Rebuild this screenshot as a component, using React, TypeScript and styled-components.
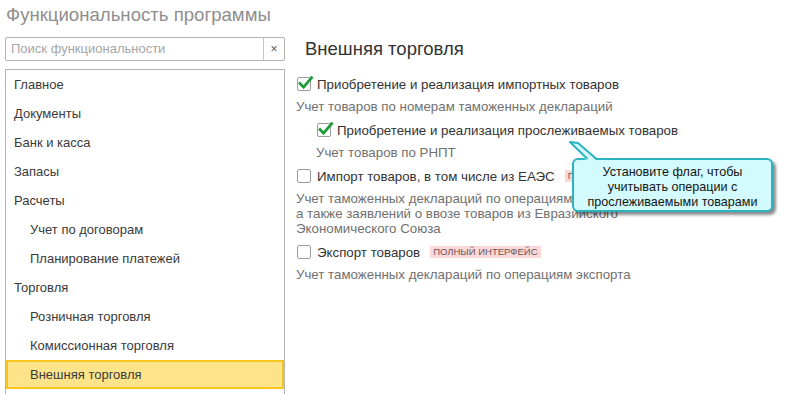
import React from "react";
import styled, { createGlobalStyle } from "styled-components";

const Global = createGlobalStyle`
  html, body { margin: 0; padding: 0; background: #fff; overflow: hidden; }
  body { font-family: "Liberation Sans", Arial, sans-serif; }
`;

const Page = styled.div`
  position: relative;
  width: 788px;
  height: 394px;
  overflow: hidden;
`;

const Title = styled.h1`
  margin: 0;
  padding-left: 6px;
  height: 30px;
  font-weight: normal;
  font-size: 18.6px;
  line-height: 30px;
  color: #8e8e8e;
`;

const Body = styled.div`
  display: flex;
  margin-top: 7px;
`;

const Sidebar = styled.div`
  flex: none;
  width: 280px;
  margin-left: 5px;
  display: flex;
  flex-direction: column;
`;

const Search = styled.div`
  display: flex;
  height: 24px;
  box-sizing: border-box;
  border: 1px solid #b3b3b3;
  border-radius: 2px;
`;

const SearchText = styled.div`
  flex: 1;
  padding-left: 5px;
  font-size: 13px;
  line-height: 22px;
  color: #a6a6a6;
`;

const ClearBtn = styled.div`
  width: 20px;
  border-left: 1px solid #c6c6c6;
  display: flex;
  align-items: center;
  justify-content: center;
  font-size: 12px;
  color: #555;
`;

const List = styled.div`
  margin-top: 8px;
  border: 1px solid #b3b3b3;
  padding-bottom: 40px;
`;

const Item = styled.div<{ $nested?: boolean; $selected?: boolean }>`
  height: 29px;
  box-sizing: border-box;
  display: flex;
  align-items: center;
  padding-left: ${(p) => (p.$nested ? 22 : 6)}px;
  border: 2px solid ${(p) => (p.$selected ? "#f6c61e" : "transparent")};
  background: ${(p) => (p.$selected ? "#fde48b" : "transparent")};
  font-size: 13px;
  color: #3a3a3a;
`;

const Content = styled.div`
  flex: 1;
  margin-left: 11px;
`;

const Heading = styled.h2`
  margin: 0;
  padding-left: 9px;
  font-weight: normal;
  font-size: 18.5px;
  line-height: 24px;
  color: #333;
`;

const Options = styled.div`
  margin-top: 13px;
`;

const Group = styled.div<{ $indent: number }>`
  padding-left: ${(p) => p.$indent}px;
  & + & {
    margin-top: 6px;
  }
`;

const Row = styled.div`
  display: flex;
  align-items: center;
  height: 20px;
  padding-left: 1px;
  font-size: 13.3px;
  color: #333;
`;

const Box = styled.span`
  position: relative;
  flex: none;
  width: 14px;
  height: 14px;
  box-sizing: border-box;
  border: 1px solid #9c9c9c;
  border-radius: 2px;
  background: #fff;
  margin-right: 6px;
`;

const Tick = styled.svg`
  position: absolute;
  left: 0;
  top: -2px;
  overflow: visible;
`;

const Badge = styled.span`
  margin-left: 10px;
  padding: 0 3px;
  background: #fbd8d8;
  color: #6a5656;
  font-size: 9.5px;
  line-height: 12px;
  text-transform: uppercase;
`;

const Desc = styled.div`
  margin-top: 5px;
  font-size: 13.3px;
  line-height: 15px;
  color: #707070;
`;

const Balloon = styled.div`
  position: absolute;
  left: 566px;
  top: 140px;
  width: 210px;
`;

const BalloonBox = styled.div`
  margin: 18px 0 0 6px;
  width: 201px;
  height: 54px;
  box-sizing: border-box;
  border: 2px solid #2ab3c1;
  border-radius: 6px;
  background: #d3fbfd;
  box-shadow: 3px 3px 3px rgba(0, 0, 0, 0.45);
  padding-top: 5px;
  text-align: center;
  font-size: 12.6px;
  line-height: 15px;
  color: #141414;
`;

const Tail = styled.svg`
  position: absolute;
  left: 0;
  top: 0;
`;

function Check({ checked }: { checked?: boolean }) {
  return (
    <Box>
      {checked && (
        <Tick width="14" height="14" viewBox="0 0 14 14">
          <path d="M2 7.5 L5.6 11.2 L13.6 1.6" fill="none" stroke="#1d9d3a" strokeWidth="2.8" strokeLinecap="square" strokeLinejoin="miter" />
        </Tick>
      )}
    </Box>
  );
}

const nav: { label: string; nested?: boolean; selected?: boolean }[] = [
  { label: "Главное" },
  { label: "Документы" },
  { label: "Банк и касса" },
  { label: "Запасы" },
  { label: "Расчеты" },
  { label: "Учет по договорам", nested: true },
  { label: "Планирование платежей", nested: true },
  { label: "Торговля" },
  { label: "Розничная торговля", nested: true },
  { label: "Комиссионная торговля", nested: true },
  { label: "Внешняя торговля", nested: true, selected: true },
];

export default function App() {
  return (
    <Page>
      <Global />
      <Title>Функциональность программы</Title>
      <Body>
        <Sidebar>
          <Search>
            <SearchText>Поиск функциональности</SearchText>
            <ClearBtn>×</ClearBtn>
          </Search>
          <List>
            {nav.map((n) => (
              <Item key={n.label} $nested={n.nested} $selected={n.selected}>
                {n.label}
              </Item>
            ))}
          </List>
        </Sidebar>
        <Content>
          <Heading>Внешняя торговля</Heading>
          <Options>
            <Group $indent={0}>
              <Row>
                <Check checked />
                Приобретение и реализация импортных товаров
              </Row>
              <Desc>Учет товаров по номерам таможенных деклараций</Desc>
            </Group>
            <Group $indent={20}>
              <Row>
                <Check checked />
                Приобретение и реализация прослеживаемых товаров
              </Row>
              <Desc>Учет товаров по РНПТ</Desc>
            </Group>
            <Group $indent={0}>
              <Row>
                <Check />
                Импорт товаров, в том числе из ЕАЭС
                <Badge>Полный интерфейс</Badge>
              </Row>
              <Desc>
                Учет таможенных деклараций по операциям импорта,
                <br />
                а также заявлений о ввозе товаров из Евразийского
                <br />
                Экономического Союза
              </Desc>
            </Group>
            <Group $indent={0}>
              <Row>
                <Check />
                Экспорт товаров
                <Badge>Полный интерфейс</Badge>
              </Row>
              <Desc>Учет таможенных деклараций по операциям экспорта</Desc>
            </Group>
          </Options>
        </Content>
      </Body>
      <Balloon>
        <BalloonBox>
          Установите флаг, чтобы
          <br />
          учитывать операции с
          <br />
          прослеживаемыми товарами
        </BalloonBox>
        <Tail width="40" height="24" viewBox="0 0 40 24">
          <path d="M21 21 L4 2 L12 3 L31 21 Z" fill="#d3fbfd" />
          <path d="M21.5 19 L4 2 L12 3 L30.5 19" fill="none" stroke="#2ab3c1" strokeWidth="2" strokeLinejoin="round" />
        </Tail>
      </Balloon>
    </Page>
  );
}
